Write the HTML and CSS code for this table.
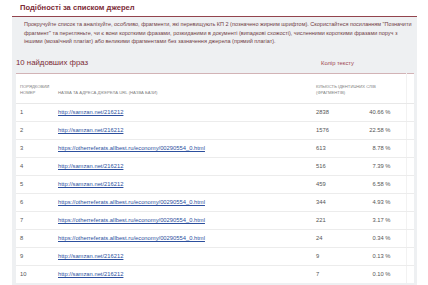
FILE: index.html
```html
<!DOCTYPE html>
<html lang="uk">
<head>
    <meta charset="UTF-8">
    <meta name="viewport" content="width=device-width, initial-scale=1.0">
    <title>Подібності за списком джерел</title>
    <link rel="stylesheet" href="styles.css">
</head>
<body>
    <div class="section">
        <h2 class="section-title">Подібності за списком джерел</h2>

        <div class="panel">
            <p class="hint">Прокручуйте список та аналізуйте, особливо, фрагменти, які перевищують КП 2 (позначено жирним шрифтом). Скористайтеся посиланням "Позначити<br>фрагмент" та перегляньте, чи є вони короткими фразами, розкиданими в документі (випадкові схожості), численними короткими фразами поруч з<br>іншими (мозаїчний плагіат) або великими фрагментами без зазначення джерела (прямий плагіат).</p>

            <!-- заголовок таблиці -->
            <div class="table-head">
                <h3>10 найдовших фраз</h3>
                <span class="color-label">Колір тексту</span>
            </div>

            <table class="sources">
                <colgroup>
                    <col class="c-num">
                    <col class="c-url">
                    <col class="c-count">
                    <col class="c-pct">
                    <col class="c-end">
                </colgroup>
                <thead>
                    <tr>
                        <th>Порядковий номер</th>
                        <th>Назва та адреса джерела URL (назва бази)</th>
                        <th colspan="2">Кількість ідентичних слів<br>(фрагментів)</th>
                        <th class="end"></th>
                    </tr>
                </thead>
                <tbody>
                    <tr><td>1</td><td><a href="#">http://samzan.net/216212</a></td><td>2838</td><td class="pct">40.66 %</td><td class="end"></td></tr>
                    <tr><td>2</td><td><a href="#">http://samzan.net/216212</a></td><td>1576</td><td class="pct">22.58 %</td><td class="end"></td></tr>
                    <tr><td>3</td><td><a href="#">https://otherreferats.allbest.ru/economy/00290554_0.html</a></td><td>613</td><td class="pct">8.78 %</td><td class="end"></td></tr>
                    <tr><td>4</td><td><a href="#">http://samzan.net/216212</a></td><td>516</td><td class="pct">7.39 %</td><td class="end"></td></tr>
                    <tr><td>5</td><td><a href="#">http://samzan.net/216212</a></td><td>459</td><td class="pct">6.58 %</td><td class="end"></td></tr>
                    <tr><td>6</td><td><a href="#">https://otherreferats.allbest.ru/economy/00290554_0.html</a></td><td>344</td><td class="pct">4.93 %</td><td class="end"></td></tr>
                    <tr><td>7</td><td><a href="#">https://otherreferats.allbest.ru/economy/00290554_0.html</a></td><td>221</td><td class="pct">3.17 %</td><td class="end"></td></tr>
                    <tr><td>8</td><td><a href="#">https://otherreferats.allbest.ru/economy/00290554_0.html</a></td><td>24</td><td class="pct">0.34 %</td><td class="end"></td></tr>
                    <tr><td>9</td><td><a href="#">http://samzan.net/216212</a></td><td>9</td><td class="pct">0.13 %</td><td class="end"></td></tr>
                    <tr><td>10</td><td><a href="#">http://samzan.net/216212</a></td><td>7</td><td class="pct">0.10 %</td><td class="end"></td></tr>
                </tbody>
            </table>
        </div>
    </div>
</body>
</html>
```

FILE: styles.css
```css
body {
    font-family: 'Liberation Sans', Arial, sans-serif;
    background: #fff;
    margin: 0;
    color: #555;
}
.section {
    margin: 0 11px 0 12px;
}
.section-title {
    margin: 0;
    height: 16px;
    line-height: 15px;
    padding-left: 8px;
    font-size: 7.6px;
    font-weight: bold;
    color: #7c2b36;
    border-bottom: 1px solid #93444d;
}
.panel {
    background: #eef0f2;
    padding: 3px 3px 4px 4px;
}
.hint {
    margin: 0 0 0 8px;
    font-size: 5.5px;
    line-height: 8.5px;
    color: #6e3c43;
}
.table-head {
    display: flex;
    align-items: center;
    padding: 11px 0 4px;
}
.table-head h3 {
    flex: 1;
    margin: 0;
    font-size: 7.8px;
    line-height: 12px;
    font-weight: normal;
    color: #7c2b36;
}
.color-label {
    width: 93px;
    font-size: 5.8px;
    color: #a0454f;
}
.sources {
    width: 100%;
    table-layout: fixed;
    border-collapse: collapse;
    background: #fff;
    border-top: 1px solid #d2b3b6;
}
.c-num { width: 38px; }
.c-url { width: 258px; }
.c-count { width: 38px; }
.c-pct { width: 56px; }
.c-end { width: 8px; }
.sources th {
    height: 23px;
    padding: 0 4px 6px;
    vertical-align: bottom;
    text-align: left;
    font-size: 4.2px;
    line-height: 6.5px;
    font-weight: normal;
    text-transform: uppercase;
    color: #808080;
    border-bottom: 1px solid #e8e8e8;
}
.sources td {
    height: 17px;
    padding: 0 4px;
    font-size: 5.8px;
    color: #555;
    border-bottom: 1px solid #ececec;
}
.sources tbody tr:last-child td {
    border-bottom: none;
}
.sources a {
    color: #2c4f9e;
    text-decoration: underline;
}
.sources .pct {
    text-align: right;
    padding-right: 15px;
}
.sources .end {
    padding: 0;
    border-left: 1px solid #f2f2f2;
}
```
